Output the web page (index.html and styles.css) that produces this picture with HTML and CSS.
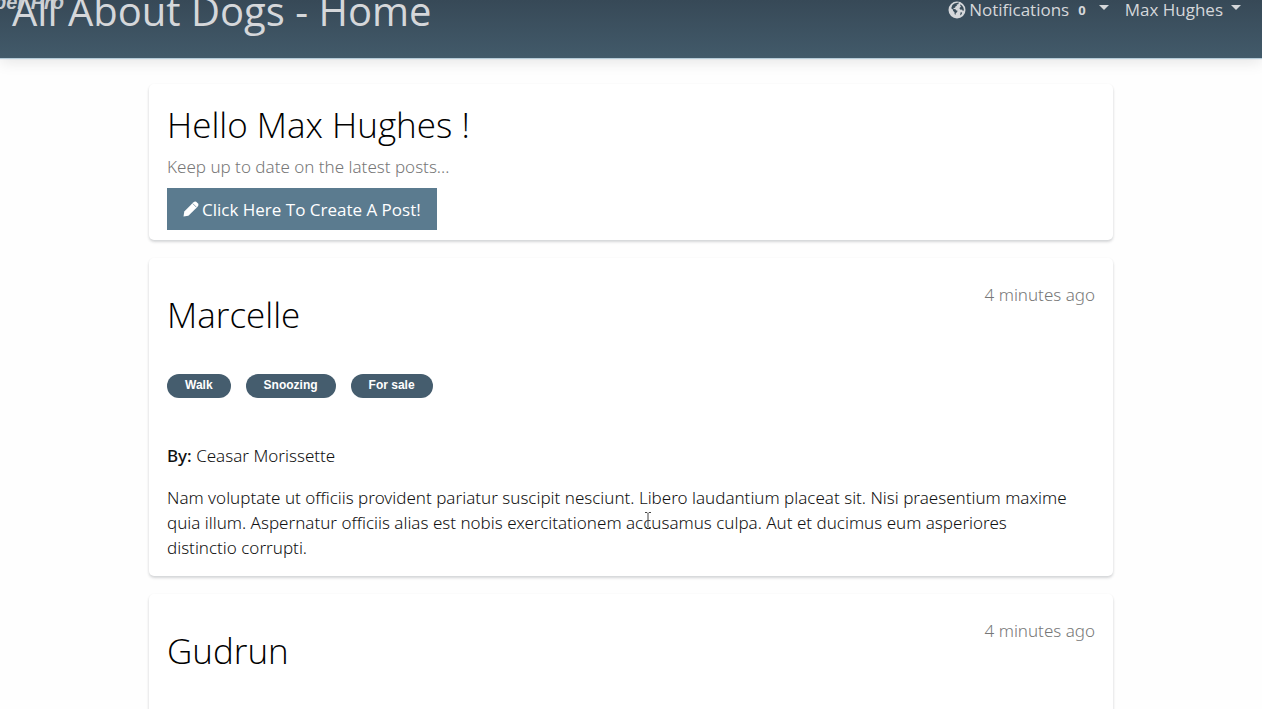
FILE: index.html
```
<!DOCTYPE html>
<html lang="en">
<head>
<meta charset="utf-8">
<meta name="viewport" content="width=device-width, initial-scale=1">
<title>All About Dogs - Home</title>
<link rel="stylesheet" href="styles.css">
</head>
<body>
<header class="navbar">
  <span class="watermark">per Pro</span>
  <a class="brand" href="#">All About Dogs - Home</a>
  <nav class="menu">
    <button class="menu-item" type="button">
      <svg class="globe" viewBox="0 0 18 18" aria-hidden="true"><circle cx="9" cy="9" r="8.5" fill="#d5d7da"/><path fill="#394c59" d="M9.3 1.8 11 1.6 10.2 3.2 8.6 3.6 8.9 4.8 7.4 5.6 7.1 6.8 5.5 7 5.6 8.2 7.4 8.1 7.9 9.2 9.6 9.7 9 11.2 7.8 12.1 7.4 14 6.6 13 6.5 11.2 5.2 10.1 4.8 8.6 3.2 7.3 4.4 4.1 6.4 2.5ZM12.2 3.2 14 4.4 15.4 6.4 15.9 9 15 10.2 14.1 8.6 12.6 8.8 11.5 7.6 12 6.2 13.3 6 12.3 4.9ZM12.6 11.2 14.2 11.4 13.6 13.2 12.1 14.5Z"/></svg>
      <span>Notifications</span><span class="badge">0</span><span class="caret"></span>
    </button>
    <button class="menu-item" type="button"><span>Max Hughes</span><span class="caret"></span></button>
  </nav>
</header>
<main class="feed">
  <section class="card welcome">
    <h1 class="heading">Hello Max Hughes !</h1>
    <p class="muted">Keep up to date on the latest posts...</p>
    <a class="create" href="#">
      <svg class="pencil" viewBox="0 0 16 16" aria-hidden="true"><path fill="#fff" d="M.5 15.5 1.3 10.6 10.2 1.4Q12 0 13.2.7L15.3 2.8Q16 4 14.6 5.8L5.4 14.7Z"/><path fill="none" stroke="#5b7b8f" stroke-width=".7" d="M9.8 2.6 13.4 6.2"/></svg>
      <span>Click Here To Create A Post!</span>
    </a>
  </section>
  <article class="card post">
    <div class="post-head"><h2 class="heading">Marcelle</h2><time class="muted">4 minutes ago</time></div>
    <div class="tags"><a class="tag" href="#">Walk</a><a class="tag" href="#">Snoozing</a><a class="tag" href="#">For sale</a></div>
    <p class="author"><b>By:</b> Ceasar Morissette</p>
    <p class="text">Nam voluptate ut officiis provident pariatur suscipit nesciunt. Libero laudantium placeat sit. Nisi praesentium maxime quia illum. Aspernatur officiis alias est nobis exercitationem accusamus culpa. Aut et ducimus eum asperiores distinctio corrupti.</p>
  </article>
  <article class="card post post-next">
    <div class="post-head"><h2 class="heading">Gudrun</h2><time class="muted">4 minutes ago</time></div>
  </article>
</main>
<svg class="cursor" viewBox="0 0 8 16" aria-hidden="true"><path fill="none" stroke="#444" d="M1 .5H3L4 1.5 5 .5H7M4 1.5V14.5M1 15.5H3L4 14.5 5 15.5H7"/></svg>
</body>
</html>
```
FILE: styles.css
```
* { box-sizing: border-box; }
body {
  margin: 0;
  height: 100vh;
  overflow: hidden;
  background: #fefefe;
  color: #111;
  font: 300 17px/25px "Noto Sans", "Open Sans", sans-serif;
}
h1, h2, p { margin: 0; font-weight: 300; }
button { border: 0; padding: 0; background: none; font: inherit; color: inherit; }
a { color: inherit; text-decoration: none; }

.navbar {
  position: relative;
  display: flex;
  justify-content: space-between;
  align-items: flex-start;
  height: 58px;
  padding: 0 21px 0 12px;
  background: linear-gradient(#374957, #425a6a);
  box-shadow: 0 1px 1px #b5cbd8, 0 4px 14px rgba(0, 0, 0, .1);
  color: #d5d7da;
  font-family: "Open Sans", sans-serif;
  font-weight: 400;
}
.brand { margin-top: -14px; font-size: 40px; line-height: 50px; }
.watermark {
  position: absolute;
  left: -6px;
  top: -9px;
  color: #c8ccd0;
  font: italic bold 20px/22px "Liberation Sans", sans-serif;
}
.menu { display: flex; gap: 16px; margin-top: -4px; }
.menu-item { display: flex; align-items: center; line-height: 25px; }
.globe { width: 18px; height: 18px; margin-right: 3px; }
.badge { margin: 2px 5px 0 9px; font-size: 13px; font-weight: 700; }
.caret {
  margin: -4px 0 0 8px;
  border: 5px solid transparent;
  border-top-color: currentColor;
  border-bottom: 0;
}

.feed {
  display: flex;
  flex-direction: column;
  gap: 18px;
  max-width: 964px;
  margin: 26px auto 0;
}
.card {
  padding: 18px;
  border-radius: 5px;
  background: #fff;
  box-shadow: 0 2px 3px rgba(20, 30, 40, .15), 0 1px 3px rgba(20, 30, 40, .06);
}
.welcome { padding-bottom: 10px; }
.heading { color: #000; font-family: "Open Sans", sans-serif; font-size: 35px; line-height: 45px; }
.muted { color: #777; line-height: 24px; }
.welcome .muted { margin: 8px 0 9px; }
.create {
  display: inline-flex;
  align-items: center;
  gap: 3px;
  height: 42px;
  padding: 0 16px;
  background: #5b7b8f;
  color: #fff;
  font-family: "Open Sans", sans-serif;
  font-weight: 400;
  vertical-align: top;
}
.pencil { width: 16px; height: 16px; }

.post { padding-top: 25px; padding-bottom: 16px; }
.post-head { display: flex; justify-content: space-between; align-items: flex-start; }
.post-head .heading { margin-top: 9px; }
.tags { display: flex; gap: 15px; margin: 37px 0 45px; }
.tag {
  padding: 0 18px 2px;
  border-radius: 12px;
  background: #455d6e;
  color: #fff;
  font: bold 12px/22px "Liberation Sans", sans-serif;
}
.author { margin-bottom: 17px; }
.author b { font-weight: 500; }
.text { padding-right: 18px; }
.post-next { min-height: 320px; }
.cursor { position: absolute; left: 644px; top: 512px; width: 8px; height: 16px; }
```
